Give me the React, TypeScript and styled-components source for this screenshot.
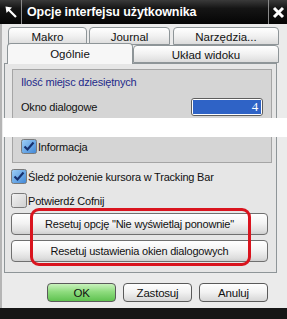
import styled, { createGlobalStyle } from 'styled-components'

const GlobalStyle = createGlobalStyle`
  html, body {
    margin: 0;
    padding: 0;
    width: 287px;
    height: 319px;
    overflow: hidden;
    background: #ebebeb;
  }
  * {
    box-sizing: border-box;
  }
`

const Window = styled.div`
  width: 287px;
  height: 319px;
  display: flex;
  flex-direction: column;
  font-family: 'Liberation Sans', Arial, sans-serif;
  font-size: 11px;
  letter-spacing: -0.2px;
  color: #111;
  background: #ebebeb;
  overflow: hidden;
`

const TitleBar = styled.div`
  height: 24px;
  flex: none;
  display: flex;
  align-items: center;
  background: linear-gradient(#3a3a3a 0%, #151515 35%, #050505 100%);
  color: #fff;
`

const TitleIcon = styled.div`
  width: 22px;
  height: 24px;
  display: flex;
  align-items: center;
  justify-content: center;
  border-right: 1px solid #8a8a8a;
`

const TitleText = styled.div`
  flex: 1;
  padding-left: 5px;
  font-weight: 700;
  font-size: 12.5px;
  letter-spacing: -0.1px;
`

const CloseBox = styled.div`
  width: 19px;
  height: 24px;
  display: flex;
  align-items: center;
  justify-content: center;
  border-left: 1px solid #8a8a8a;
`

const Body = styled.div`
  flex: 1;
  display: flex;
  flex-direction: column;
  padding: 3px 4px 0 2px;
  border-left: 2px solid #b5b5b5;
`

const TabRow = styled.div<{ $pad: number; $top?: number }>`
  display: flex;
  align-items: flex-end;
  padding-left: ${p => p.$pad}px;
  margin-top: ${p => p.$top ?? 0}px;
  width: 277px;
  flex: none;
  position: relative;
  z-index: 1;
`

const Tab = styled.div<{ $w: number; $active?: boolean; $gap?: number }>`
  flex: none;
  width: ${p => p.$w}px;
  margin-left: ${p => p.$gap ?? 0}px;
  height: ${p => (p.$active ? 21 : 18)}px;
  display: flex;
  align-items: center;
  justify-content: center;
  white-space: nowrap;
  border: 1px solid #8e9598;
  border-bottom: ${p => (p.$active ? 'none' : '1px solid #8e9598')};
  border-radius: 4px 4px 0 0;
  background: ${p =>
    p.$active ? '#f7f7f7' : 'linear-gradient(#ffffff 0%, #f1f1f1 50%, #dcdcdc 100%)'};
  font-size: 11.5px;
  letter-spacing: 0;
  padding-top: ${p => (p.$active ? 0 : 1)}px;
  margin-bottom: ${p => (p.$active ? -1 : 0)}px;
`

const Panel = styled.div`
  width: 273px;
  height: 210px;
  flex: none;
  border: 1px solid #8e9598;
  background: #e6e6e6;
  padding: 5px 5px 0 6px;
  display: flex;
  flex-direction: column;
`

const GroupBox = styled.div`
  width: 260px;
  margin-left: 1px;
  border: 1px solid #a5a5a5;
  background: #d5d5d5;
  padding: 4px 0 0 8px;
  display: flex;
  flex-direction: column;
`

const GroupTitle = styled.div`
  color: #1f2a8a;
  height: 16px;
  line-height: 16px;
`

const FieldRow = styled.div`
  display: flex;
  align-items: center;
  justify-content: space-between;
  padding-right: 8px;
  margin-top: 7px;
  height: 20px;
`

const NumberBox = styled.div`
  width: 72px;
  height: 18px;
  border: 1px solid #5d5d5d;
  border-radius: 3px;
  padding: 1px;
  background: #fff;
  display: flex;
`

const NumberFill = styled.div`
  flex: 1;
  background: #2f63c6;
  color: #fff;
  text-align: right;
  padding-right: 3px;
  line-height: 14px;
  font-size: 13px;
  font-family: 'Liberation Serif', serif;
`

const WhiteStrip = styled.div`
  height: 19px;
  margin: 1px -17px 0 -18px;
  background: #ffffff;
`

const CheckRow = styled.label<{ $top: number }>`
  display: flex;
  align-items: center;
  height: 15px;
  margin-top: ${p => p.$top}px;
  gap: 1px;
  white-space: nowrap;
`

const GroupEnd = styled.div`
  height: 8px;
`

const ResetArea = styled.div`
  position: relative;
  margin-top: 5px;
  display: flex;
  flex-direction: column;
  gap: 5px;
  width: 257px;
`

const WideButton = styled.div`
  height: 22px;
  display: flex;
  align-items: center;
  justify-content: center;
  border: 1px solid #6f6f6f;
  border-radius: 4px;
  background: linear-gradient(#ffffff 0%, #f3f3f3 45%, #dedede 85%, #cfcfcf 100%);
`

const RedMark = styled.div`
  position: absolute;
  left: 19px;
  top: -5px;
  width: 221px;
  height: 58px;
  border: 3px solid #d9141e;
  border-radius: 9px;
  pointer-events: none;
`

const Footer = styled.div`
  display: flex;
  justify-content: flex-end;
  gap: 7px;
  width: 277px;
  padding-right: 13px;
  margin-top: 10px;
`

const DialogButton = styled.div<{ $primary?: boolean }>`
  width: 69px;
  height: 19px;
  display: flex;
  align-items: center;
  justify-content: center;
  border: 1px solid #5a5a5a;
  border-radius: 4px;
  font-size: 11.5px;
  background: ${p =>
    p.$primary
      ? 'linear-gradient(#c9f2bd 0%, #8fdc7f 45%, #5fc250 100%)'
      : 'linear-gradient(#ffffff 0%, #f1f1f1 50%, #d6d6d6 100%)'};
`

const BottomBar = styled.div`
  height: 11px;
  flex: none;
  background: #161616;
`

function CheckBox({ checked }: { checked: boolean }) {
  return (
    <svg width="16" height="15" viewBox="0 0 16 15">
      <defs>
        <linearGradient id="cbOn" x1="0" y1="0" x2="1" y2="1">
          <stop offset="0" stopColor="#9fd0f7" />
          <stop offset="1" stopColor="#3f86d6" />
        </linearGradient>
        <linearGradient id="cbOff" x1="0" y1="0" x2="1" y2="1">
          <stop offset="0" stopColor="#f4f4f4" />
          <stop offset="1" stopColor="#cfcfcf" />
        </linearGradient>
      </defs>
      <rect x="0.5" y="0.5" width="15" height="14" rx="2" fill={checked ? 'url(#cbOn)' : 'url(#cbOff)'} stroke="#7a7a7a" />
      {checked && <path d="M3.5 7.5 L6.5 10.5 L12.5 3.5" fill="none" stroke="#16306e" strokeWidth="2.2" />}
    </svg>
  )
}

export default function App() {
  return (
    <Window>
      <GlobalStyle />
      <TitleBar>
        <TitleIcon>
          <svg width="14" height="14" viewBox="0 0 14 14">
            <path d="M12 12 L3 3" stroke="#fff" strokeWidth="2.2" />
            <path d="M1.5 1.5 L8 2.5 L2.5 8 Z" fill="#fff" />
          </svg>
        </TitleIcon>
        <TitleText>Opcje interfejsu użytkownika</TitleText>
        <CloseBox>
          <svg width="13" height="13" viewBox="0 0 13 13">
            <path d="M2 2 L11 11 M11 2 L2 11" stroke="#fff" strokeWidth="3" />
          </svg>
        </CloseBox>
      </TitleBar>
      <Body>
        <TabRow $pad={4}>
          <Tab $w={79}>Makro</Tab>
          <Tab $w={81} $gap={2}>Journal</Tab>
          <Tab $w={106} $gap={3}>Narzędzia...</Tab>
        </TabRow>
        <TabRow $pad={3} $top={-2}>
          <Tab $w={126} $active>Ogólnie</Tab>
          <Tab $w={146}>Układ widoku</Tab>
        </TabRow>
        <Panel>
          <GroupBox>
            <GroupTitle>Ilość miejsc dziesiętnych</GroupTitle>
            <FieldRow>
              <span>Okno dialogowe</span>
              <NumberBox>
                <NumberFill>4</NumberFill>
              </NumberBox>
            </FieldRow>
            <WhiteStrip />
            <CheckRow $top={2}>
              <CheckBox checked />
              Informacja
            </CheckRow>
            <GroupEnd />
          </GroupBox>
          <CheckRow $top={6}>
            <CheckBox checked />
            Śledź położenie kursora w Tracking Bar
          </CheckRow>
          <CheckRow $top={9}>
            <CheckBox checked={false} />
            Potwierdź Cofnij
          </CheckRow>
          <ResetArea>
            <WideButton>Resetuj opcję "Nie wyświetlaj ponownie"</WideButton>
            <WideButton>Resetuj ustawienia okien dialogowych</WideButton>
            <RedMark />
          </ResetArea>
        </Panel>
        <Footer>
          <DialogButton $primary>OK</DialogButton>
          <DialogButton>Zastosuj</DialogButton>
          <DialogButton>Anuluj</DialogButton>
        </Footer>
      </Body>
      <BottomBar />
    </Window>
  )
}
